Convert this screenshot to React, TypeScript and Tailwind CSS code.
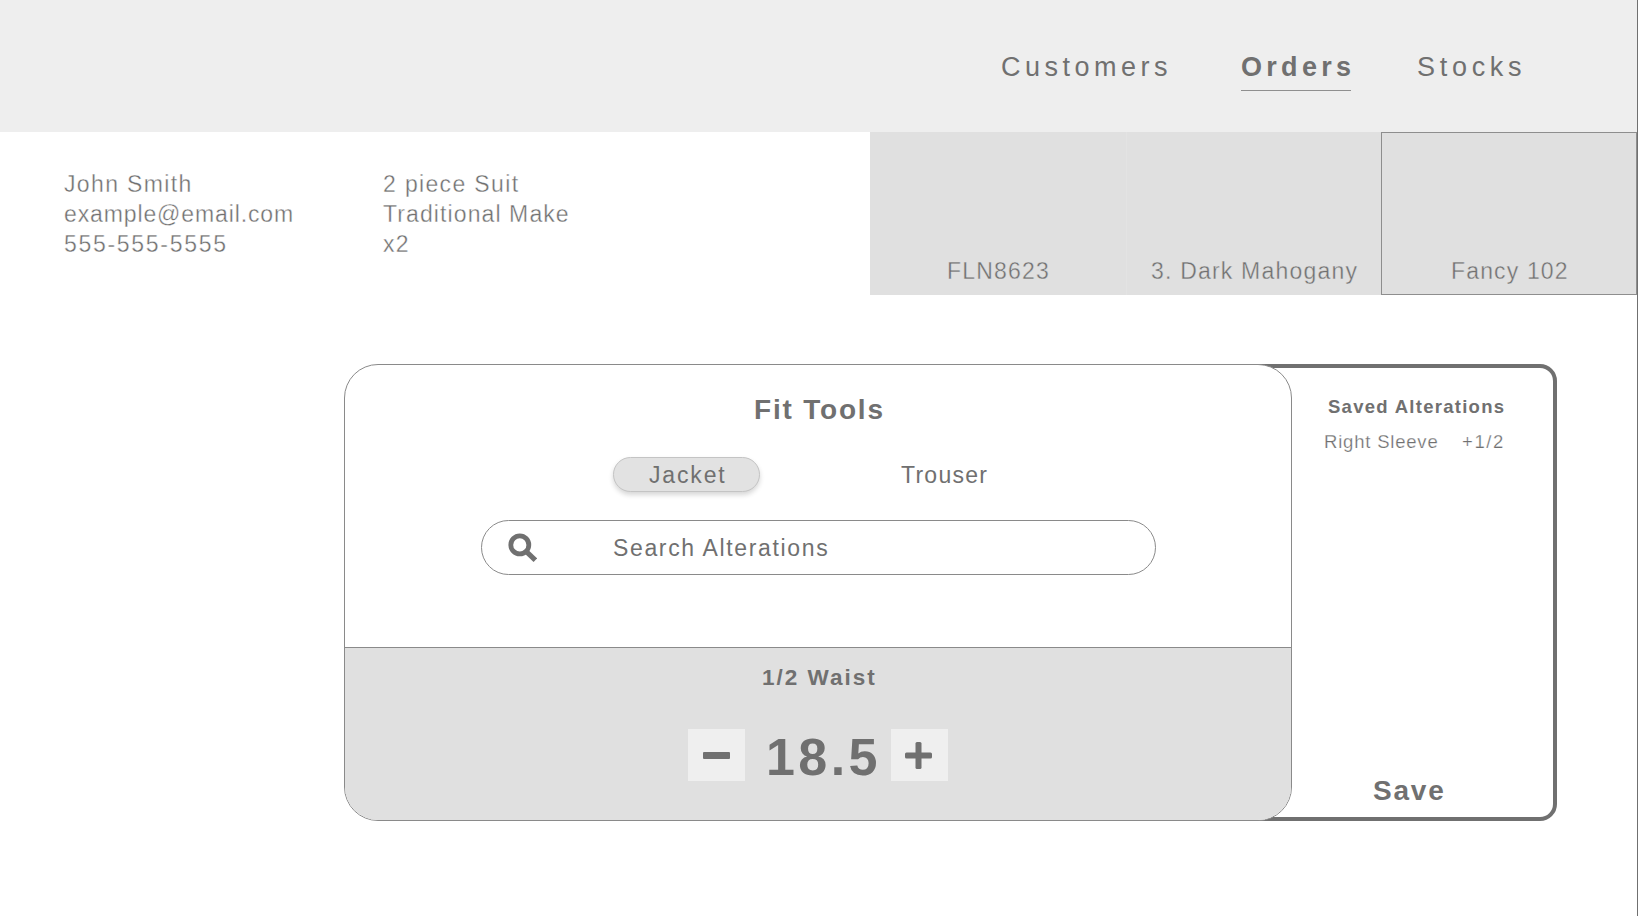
import React from "react";

const materials = [
  { name: "FLN8623", style: "w-[256px] pl-[77px] pb-[8px] tracking-[1.2px]" },
  { name: "3. Dark Mahogany", style: "w-[255px] pl-[24px] pb-[8px] tracking-[1.2px] border-l border-[#e3e3e3]" },
  { name: "Fancy 102", style: "w-[256px] pl-[69px] pb-[7px] tracking-[1.15px] border border-[#8e8e8e]" },
];

function Header() {
  return (
    <header className="flex h-[132px] bg-[#eeeeee] pt-[51px] pl-[1001px] text-[27px] leading-8">
      <nav className="flex items-start">
        <a className="w-[240px] tracking-[4.5px]">Customers</a>
        <a className="flex w-[176px] flex-col font-bold tracking-[4.3px]">
          Orders
          <span className="mt-[7px] h-px w-[110px] bg-[#8f8f8f]" />
        </a>
        <a className="tracking-[4.7px]">Stocks</a>
      </nav>
    </header>
  );
}

function OrderInfo() {
  return (
    <section className="flex h-[163px] text-[23px]">
      <div className="w-[319px] pt-[37px] pl-16 leading-[30px] [-webkit-text-stroke:0.35px_white]">
        <p className="tracking-[1.35px]">John Smith</p>
        <p className="tracking-[0.88px]">example@email.com</p>
        <p className="tracking-[1.7px]">555-555-5555</p>
      </div>
      <div className="w-[551px] pt-[37px] pl-16 leading-[30px] [-webkit-text-stroke:0.35px_white]">
        <p className="tracking-[1.35px]">2 piece Suit</p>
        <p className="tracking-[1.1px]">Traditional Make</p>
        <p className="tracking-[1.3px]">x2</p>
      </div>
      {materials.map((m) => (
        <div
          key={m.name}
          className={`flex items-end whitespace-nowrap bg-[#e0e0e0] ${m.style}`}
        >
          <span className="leading-8 [-webkit-text-stroke:0.35px_#e0e0e0]">{m.name}</span>
        </div>
      ))}
    </section>
  );
}

function SearchIcon() {
  return (
    <svg viewBox="0 0 30 30" className="h-[30px] w-[30px]" fill="none" stroke="#707070">
      <circle cx="12.8" cy="11.9" r="9" strokeWidth="4.8" />
      <path d="M19.1 18.4 L28.3 27.2" strokeWidth="5" />
    </svg>
  );
}

function FitTools() {
  return (
    <section className="relative z-10 flex h-[457px] w-[948px] flex-col overflow-hidden rounded-[34px] border border-[#8a8a8a] bg-white">
      <h1 className="mt-[29px] pl-[409px] text-[28px] leading-8 font-bold tracking-[1.8px]">Fit Tools</h1>
      <div className="mt-[31px] flex h-[35px] pl-[268px] text-[23px] leading-[35px]">
        <button className="flex h-[35px] w-[147px] rounded-full border border-[#c4c4c4] bg-[#e2e2e2] pl-[35px] leading-[35px] tracking-[1.85px] shadow-[0_3px_5px_rgba(0,0,0,0.16)]">
          Jacket
        </button>
        <button className="ml-[141px] flex leading-[36px] tracking-[1.25px]">Trouser</button>
      </div>
      <div className="mt-[28px] ml-[136px] flex h-[55px] w-[675px] items-center rounded-full border border-[#8a8a8a] pl-[25px] text-[23px]">
        <SearchIcon />
        <span className="ml-[76px] pt-px leading-[54px] tracking-[1.65px]">Search Alterations</span>
      </div>
      <div className="mt-[72px] flex-1 border-t border-[#8a8a8a] bg-[#e0e0e0]">
        <h2 className="mt-[14px] pl-[417px] text-[22.5px] leading-8 font-bold tracking-[2px]">1/2 Waist</h2>
        <div className="mt-[33px] flex items-center pl-[343px]">
          <button className="flex h-[52px] w-[57px] items-center justify-center bg-[#efefef]">
            <span className="h-[7px] w-[27px] rounded-[1px] bg-[#707070]" />
          </button>
          <span className="w-[146px] pt-[4px] pl-[21px] text-[52px] leading-[52px] font-bold tracking-[3.4px]">18.5</span>
          <button className="flex h-[52px] w-[57px] items-center justify-center bg-[#efefef] pr-[2px]">
            <svg viewBox="0 0 27 27" className="h-[27px] w-[27px]" fill="#707070">
              <rect x="0" y="10.5" width="27" height="6" rx="1.5" />
              <rect x="10.5" y="0" width="6" height="27" rx="1.5" />
            </svg>
          </button>
        </div>
      </div>
    </section>
  );
}

function SavedAlterations() {
  return (
    <aside className="-ml-[60px] flex h-[457px] w-[325px] flex-col rounded-[17px] border-4 border-[#707070] bg-white pl-[88px] text-[18.5px]">
      <h2 className="mt-[27px] pl-[4px] leading-6 font-bold tracking-[1.28px]">Saved Alterations</h2>
      <div className="mt-[11px] flex leading-6 [-webkit-text-stroke:0.25px_white]">
        <span className="w-[138px] tracking-[0.8px]">Right Sleeve</span>
        <span className="tracking-[1.6px]">+1/2</span>
      </div>
      <button className="mt-auto mb-[10px] flex pl-[49px] text-[28px] leading-8 font-bold tracking-[1.8px]">
        Save
      </button>
    </aside>
  );
}

export default function App() {
  return (
    <div className="relative h-[916px] w-[1638px] overflow-hidden bg-white font-['Liberation_Sans',Arial,sans-serif] text-[#707070]">
      <Header />
      <OrderInfo />
      <main className="flex pt-[69px] pl-[344px]">
        <FitTools />
        <SavedAlterations />
      </main>
      <div className="absolute inset-y-0 right-0 w-px bg-[#707070]" />
    </div>
  );
}
